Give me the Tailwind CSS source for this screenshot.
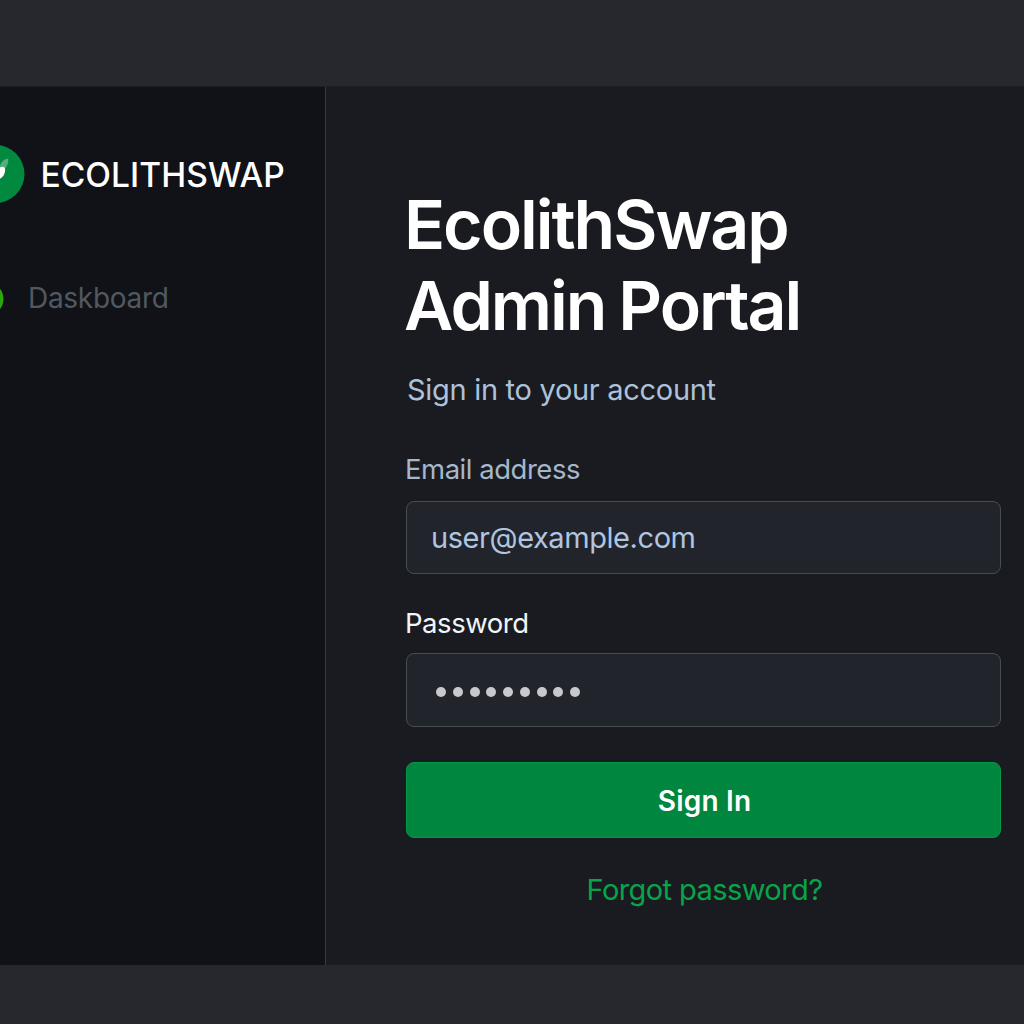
<!DOCTYPE html>
<html lang="en">
<head>
<meta charset="utf-8">
<title>EcolithSwap Admin Portal</title>
<script src="https://cdn.jsdelivr.net/npm/@tailwindcss/browser@4"></script>
</head>
<body class="flex h-screen w-screen flex-col overflow-hidden bg-[#27282d] pt-[86px] font-[Inter,sans-serif]">
  <div class="flex h-[879px] border-t border-[#1d1e22]">
    <aside class="flex w-[325px] shrink-0 flex-col overflow-hidden bg-[#101217] pt-[58px]">
      <div class="flex h-[60px] items-center">
        <svg class="h-[60px] w-[25px] shrink-0" viewBox="0 0 25 60">
          <circle cx="-4.500" cy="29" r="29" fill="#00893f"/>
          <path d="M0 20.500C1.500 16.500 4 14.200 8.200 13.500C8.500 17.500 7.500 21 5 23.500L0 23Z" fill="#55af7d"/>
          <path d="M0 22.500C2 21.300 5.100 21.300 5.200 24.500C5.200 29 3 32 0 33.800Z" fill="#fff"/>
        </svg>
        <span class="ml-[15.500px] text-[33.500px] font-medium tracking-[0.050px] whitespace-nowrap text-white">ECOLITHSWAP</span>
      </div>
      <nav class="mt-[73px] flex h-10 items-center">
        <svg class="h-10 w-1 shrink-0" viewBox="0 0 4 40"><circle cx="-13" cy="21" r="16.500" fill="#2ba80c"/></svg>
        <a class="ml-[24px] text-[28px] tracking-[-0.300px] whitespace-nowrap text-[#505962]">Daskboard</a>
      </nav>
    </aside>
    <main class="flex grow flex-col border-l border-[#3a3b3f] bg-[#1a1b20] pt-[97px] pr-[23px] pl-[80px]">
      <h1 class="-ml-0.5 text-[68px] leading-[81px] font-semibold tracking-[-2.050px] [word-spacing:-2px] whitespace-nowrap text-white">EcolithSwap<br>Admin Portal</h1>
      <p class="mt-6 ml-px text-[29px] leading-10 tracking-[-0.300px] text-[#adc1db]">Sign in to your account</p>
      <label class="mt-[45px] -ml-px text-[27.500px] leading-7 tracking-[-0.480px] text-[#a5b7cc]">Email address</label>
      <div class="mt-[18px] flex h-[73px] items-center rounded-lg border border-[#454e55] bg-[#21242a] px-6 text-[29px] tracking-[-0.430px] text-[#b0c5e0]">user@example.com</div>
      <label class="mt-[35px] -ml-px text-[27.500px] leading-7 tracking-[-0.450px] text-[#f1f5f9]">Password</label>
      <div class="mt-4 flex h-[74px] items-center gap-[6.750px] rounded-lg border border-[#454e55] bg-[#21242a] pt-[3px] pl-[29px]">
        <i class="size-[10px] rounded-full bg-[#c9c9cd]"></i><i class="size-[10px] rounded-full bg-[#c9c9cd]"></i><i class="size-[10px] rounded-full bg-[#c9c9cd]"></i><i class="size-[10px] rounded-full bg-[#c9c9cd]"></i><i class="size-[10px] rounded-full bg-[#c9c9cd]"></i><i class="size-[10px] rounded-full bg-[#c9c9cd]"></i><i class="size-[10px] rounded-full bg-[#c9c9cd]"></i><i class="size-[10px] rounded-full bg-[#c9c9cd]"></i><i class="size-[10px] rounded-full bg-[#c9c9cd]"></i>
      </div>
      <button class="mt-[35px] h-[76px] rounded-lg border border-[#059947] bg-[#00863e] pt-0.5 pl-0.5 text-[28px] font-semibold tracking-[0.200px] text-white">Sign In</button>
      <a class="mt-[37px] pl-0.5 text-center text-[29px] leading-[29px] tracking-[-0.580px] text-[#07a44a]">Forgot password?</a>
    </main>
  </div>
</body>
</html>
